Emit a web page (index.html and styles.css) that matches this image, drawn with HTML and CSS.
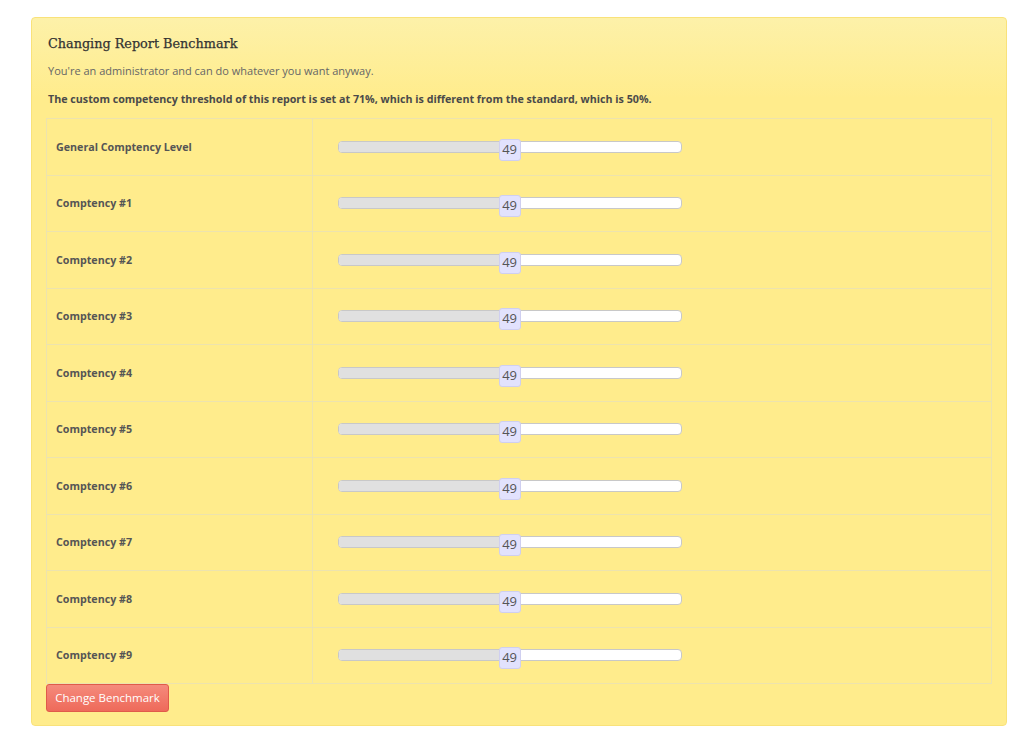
FILE: index.html
```html
<!DOCTYPE html>
<html>
<head>
<meta charset="utf-8">
<link rel="stylesheet" href="styles.css">
</head>
<body>
<div class="panel">
  <h3 class="title">Changing Report Benchmark</h3>
  <p class="note">You're an administrator and can do whatever you want anyway.</p>
  <p class="strong">The custom competency threshold of this report is set at 71%, which is different from the standard, which is 50%.</p>
  <table class="grid">
    <tr><td class="label">General Comptency Level</td><td class="cell"><div class="slider"><div class="range" style="width:49%"></div><span class="handle" style="left:49%">49</span></div></td></tr>
    <tr><td class="label">Comptency #1</td><td class="cell"><div class="slider"><div class="range" style="width:49%"></div><span class="handle" style="left:49%">49</span></div></td></tr>
    <tr><td class="label">Comptency #2</td><td class="cell"><div class="slider"><div class="range" style="width:49%"></div><span class="handle" style="left:49%">49</span></div></td></tr>
    <tr><td class="label">Comptency #3</td><td class="cell"><div class="slider"><div class="range" style="width:49%"></div><span class="handle" style="left:49%">49</span></div></td></tr>
    <tr><td class="label">Comptency #4</td><td class="cell"><div class="slider"><div class="range" style="width:49%"></div><span class="handle" style="left:49%">49</span></div></td></tr>
    <tr><td class="label">Comptency #5</td><td class="cell"><div class="slider"><div class="range" style="width:49%"></div><span class="handle" style="left:49%">49</span></div></td></tr>
    <tr><td class="label">Comptency #6</td><td class="cell"><div class="slider"><div class="range" style="width:49%"></div><span class="handle" style="left:49%">49</span></div></td></tr>
    <tr><td class="label">Comptency #7</td><td class="cell"><div class="slider"><div class="range" style="width:49%"></div><span class="handle" style="left:49%">49</span></div></td></tr>
    <tr><td class="label">Comptency #8</td><td class="cell"><div class="slider"><div class="range" style="width:49%"></div><span class="handle" style="left:49%">49</span></div></td></tr>
    <tr><td class="label">Comptency #9</td><td class="cell"><div class="slider"><div class="range" style="width:49%"></div><span class="handle" style="left:49%">49</span></div></td></tr>
  </table>
  <button class="btn">Change Benchmark</button>
</div>
</body>
</html>
```
FILE: styles.css
```css
html, body {
  margin: 0;
  padding: 0;
  background: #ffffff;
}
body {
  font-family: "Open Sans", "Liberation Sans", sans-serif;
  color: #555;
}
.panel {
  margin: 17px 0 0 31px;
  width: 976px;
  height: 709px;
  box-sizing: border-box;
  border: 1px solid #f9e27a;
  border-radius: 4px;
  background: linear-gradient(#fdf1a9 0px, #ffec8c 80px, #ffec8c 100%);
  padding: 14px 15px 13px 14px;
}
.title {
  margin: 0;
  font-family: "DejaVu Serif", "Liberation Serif", serif;
  font-weight: normal;
  font-size: 12.8px;
  line-height: 24px;
  color: #333;
  padding-left: 2px;
  -webkit-text-stroke: 0.25px #333;
}
.note {
  margin: 7px 0 0 0;
  font-size: 11px;
  line-height: 16px;
  color: #666;
  padding-left: 2px;
}
.strong {
  margin: 12px 0 0 0;
  font-size: 10.7px;
  line-height: 16px;
  font-weight: bold;
  color: #4a4a4a;
  padding-left: 2px;
}
.grid {
  margin-top: 11px;
  width: 946px;
  border-collapse: collapse;
}
.grid td {
  border: 1px solid #ede3ae;
  height: 55.5px;
  padding: 0;
  vertical-align: middle;
}
.label {
  width: 256px;
  padding-left: 9px !important;
  font-size: 10.7px;
  font-weight: bold;
  color: #555;
}
.cell {
  padding-left: 25px !important;
}
.slider {
  position: relative;
  width: 342px;
  height: 10px;
  border: 1px solid #c8c8c8;
  border-radius: 4px;
  background: #fff;
}
.range {
  height: 100%;
  background: #e0e0e0;
  border-radius: 3px 0 0 3px;
}
.handle {
  position: absolute;
  top: -3px;
  margin-left: -8px;
  width: 20px;
  height: 20px;
  border: 1px solid #cfcff0;
  border-radius: 3px;
  background: #e2e2fd;
  font-size: 13px;
  line-height: 18px;
  text-align: center;
  color: #555;
}
.btn {
  display: block;
  margin-top: 0;
  width: 123px;
  height: 28px;
  border: 1px solid #e05a4a;
  border-radius: 3px;
  background: linear-gradient(#f58a7c, #ee6a5a);
  color: #fff;
  font-family: "Open Sans", "Liberation Sans", sans-serif;
  font-size: 11.5px;
  line-height: 26px;
  padding: 0;
}
```
